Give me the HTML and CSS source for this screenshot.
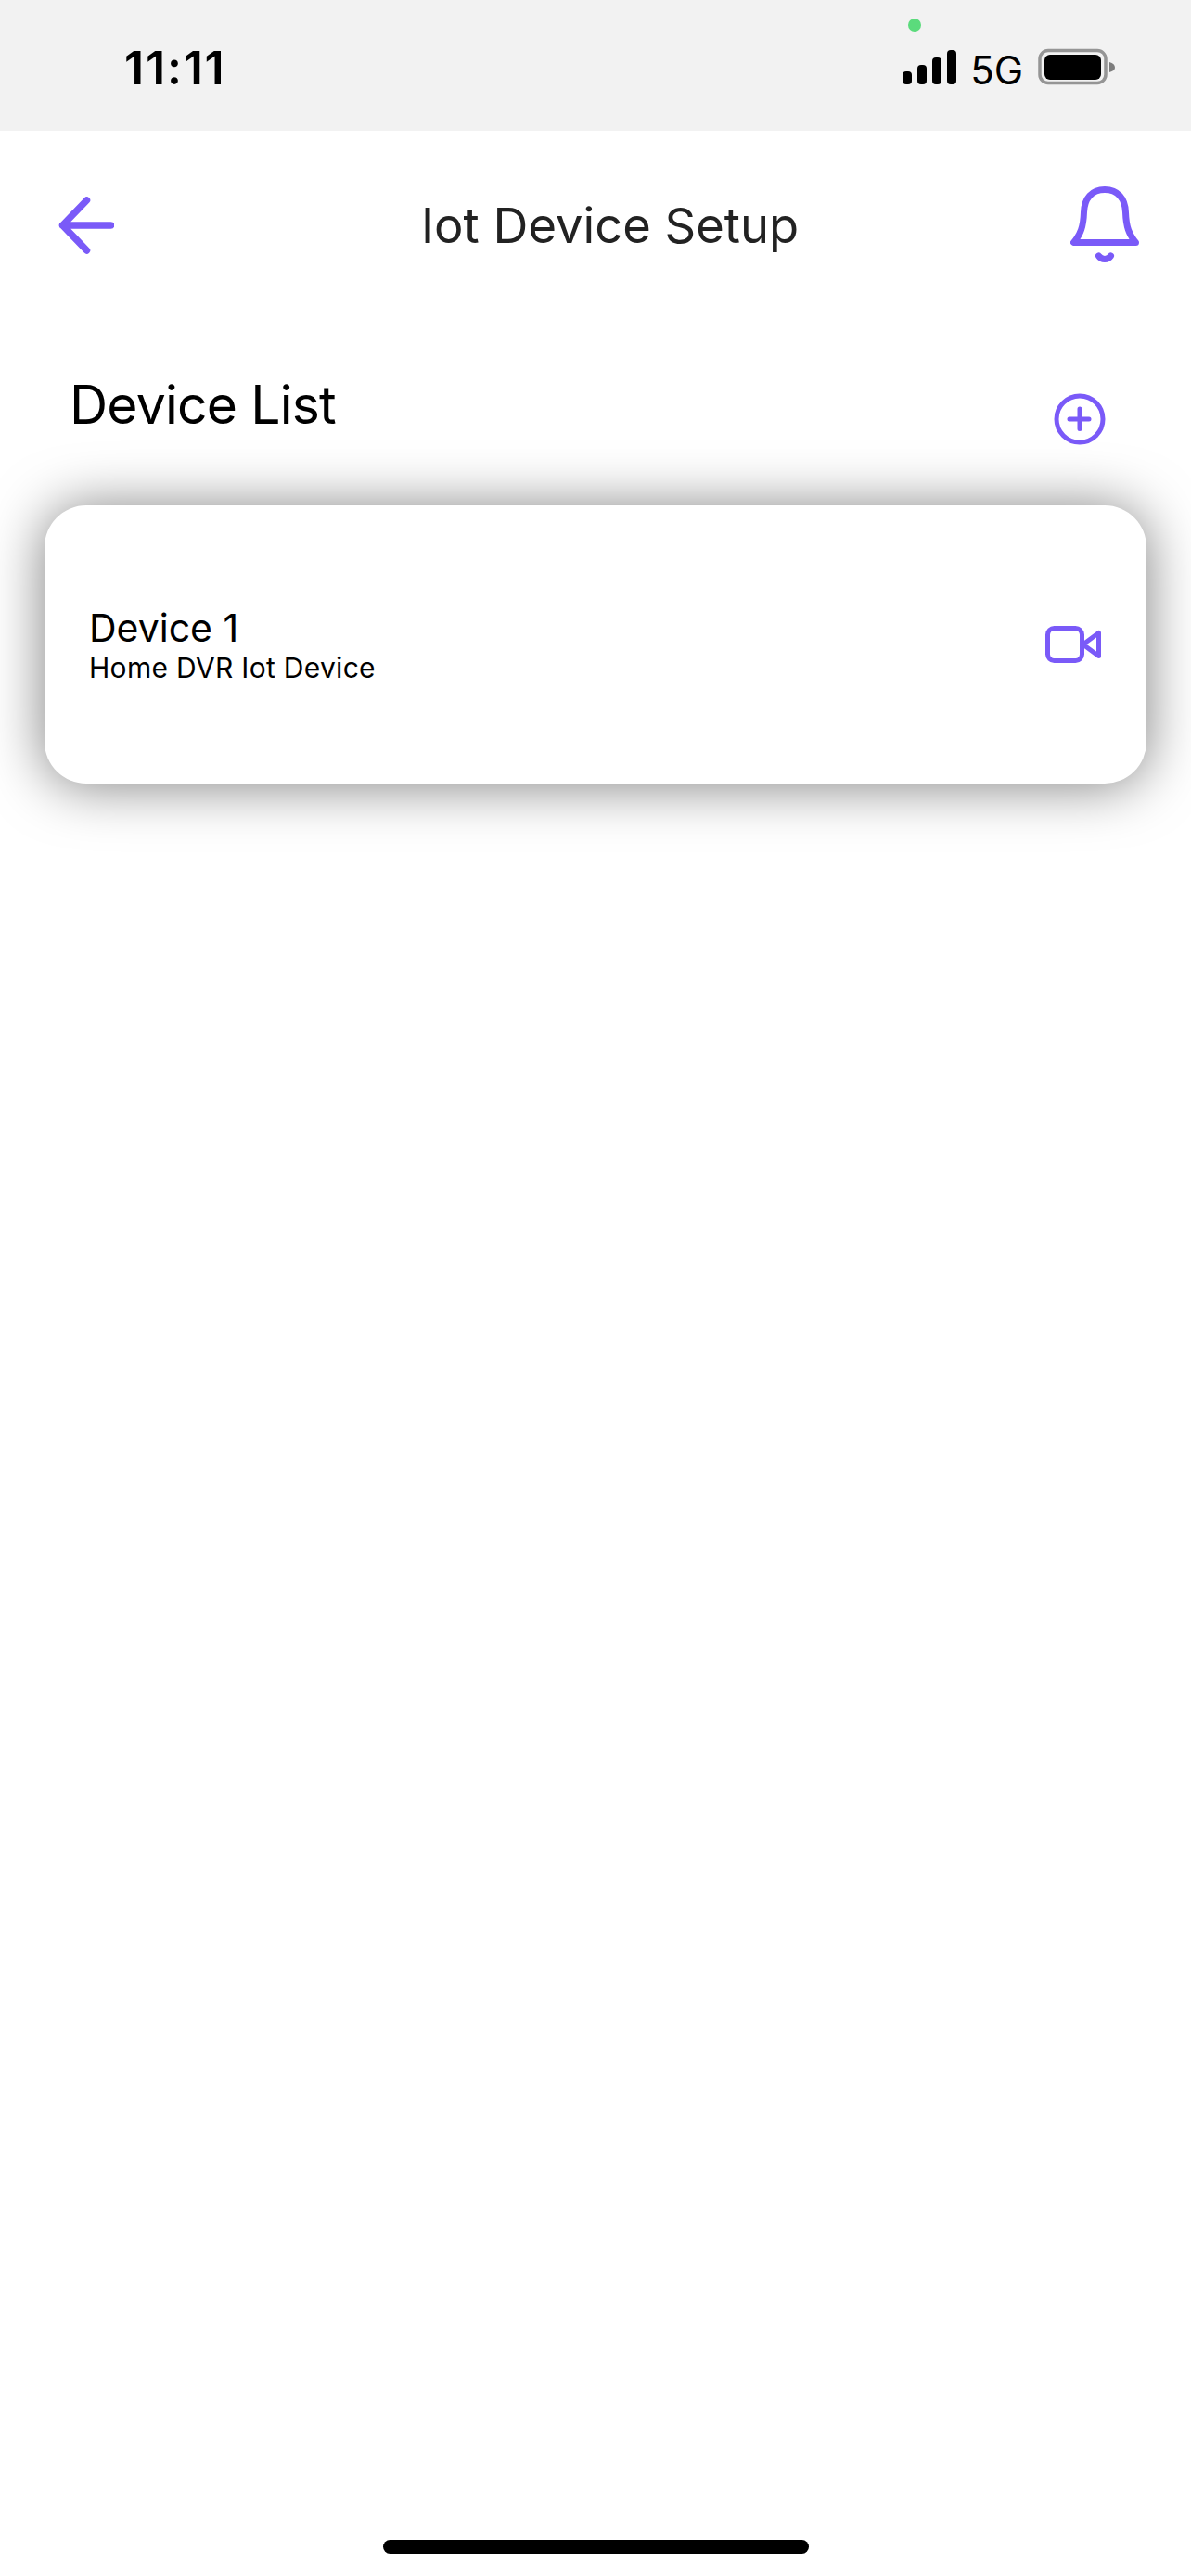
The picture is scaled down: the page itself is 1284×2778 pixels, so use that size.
FILE: index.html
```html
<!DOCTYPE html>
<html lang="en">
<head>
<meta charset="utf-8">
<title>Iot Device Setup</title>
<link rel="stylesheet" href="styles.css">
</head>
<body>
<div class="page">
  <div class="status-bar">
    <span class="time">11:11</span>
    <div class="status-icons">
      <svg class="signal" width="58" height="76" viewBox="973 16 58 76">
        <circle cx="986" cy="27" r="7" fill="#5bdb7c"/>
        <rect x="973" y="77" width="10" height="14" rx="4"/>
        <rect x="989" y="70" width="10" height="21" rx="4"/>
        <rect x="1005" y="62" width="10" height="29" rx="4"/>
        <rect x="1021" y="54" width="10" height="37" rx="4"/>
      </svg>
      <span class="network">5G</span>
      <svg class="battery" width="84" height="40" viewBox="1119 52 84 40">
        <rect x="1121" y="54.5" width="71" height="35" rx="9" fill="none" stroke="#959595" stroke-width="3.5"/>
        <rect x="1126" y="59" width="61" height="27" rx="6" fill="#000"/>
        <path d="M1196 67 C1200 68 1202 70 1202 73 C1202 75 1200 77 1196 78 Z" fill="#7d7d7d"/>
      </svg>
    </div>
  </div>

  <header class="app-bar">
    <svg class="icon-back" width="60" height="62" viewBox="63 212 60 62" fill="none" stroke="#7a5af8" stroke-width="7.5" stroke-linecap="round" stroke-linejoin="round">
      <path d="M119.500 243H67.500M93.500 216L67.500 243L93.500 270"/>
    </svg>
    <h1 class="title">Iot Device Setup</h1>
    <svg class="icon-bell" width="74" height="84" viewBox="1154 202 74 84" fill="none" stroke="#7a5af8" stroke-width="7" stroke-linecap="round" stroke-linejoin="round">
      <path d="M1157.500 262.500H1224.500C1217 254 1214 245 1213.500 230C1213 215 1205 205.500 1191 205.500C1177 205.500 1169 215 1168.500 230C1168 245 1165 254 1157.500 262.500Z"/>
      <path d="M1184.500 277C1187.500 281.500 1194.500 281.500 1197.500 277"/>
    </svg>
  </header>

  <section class="list-head">
    <h2 class="list-title">Device List</h2>
    <svg class="icon-add" width="56" height="56" viewBox="0 0 56 56" fill="none" stroke="#7a5af8" stroke-width="5" stroke-linecap="round">
      <circle cx="28" cy="28" r="25"/>
      <path d="M28 17V38.500M17 28H38"/>
    </svg>
  </section>

  <article class="device-card">
    <div class="device-text">
      <div class="device-name">Device 1</div>
      <div class="device-desc">Home DVR Iot Device</div>
    </div>
    <svg class="icon-video" width="60" height="40" viewBox="0 0 60 40" fill="none" stroke="#7a5af8" stroke-width="5" stroke-linecap="round" stroke-linejoin="round">
      <rect x="2.500" y="2.500" width="37" height="35" rx="7"/>
      <path d="M40.500 20L57.500 7.500V32.500Z"/>
    </svg>
  </article>

  <div class="home-bar"></div>
</div>
</body>
</html>
```

FILE: styles.css
```css
* { box-sizing: border-box; }
html, body { margin: 0; padding: 0; background: #fff; }
body { font-family: Inter, "Liberation Sans", sans-serif; color: #000; }
svg { display: block; flex: none; }

.page {
  width: 1284px;
  height: 2778px;
  display: flex;
  flex-direction: column;
  overflow: hidden;
}

.status-bar {
  height: 141px;
  flex: none;
  background: #f2f2f2;
  display: flex;
  justify-content: space-between;
  align-items: flex-start;
  padding: 0 81px 0 134px;
}
.time {
  font-size: 50px;
  font-weight: 600;
  line-height: 60px;
  letter-spacing: 1.800px;
  margin-top: 43px;
}
.status-icons {
  display: flex;
  align-items: flex-start;
  padding-top: 16px;
}
.network {
  font-size: 42px;
  line-height: 50px;
  margin: 35px 0 0 15px;
}
.battery { margin: 36px 0 0 16px; }

.app-bar {
  height: 204px;
  flex: none;
  display: flex;
  align-items: center;
  padding: 0 56px 0 63px;
}
.title {
  margin: 0 0 0 331px;
  font-size: 52.500px;
  font-weight: 400;
  line-height: 60px;
  color: #222;
  white-space: nowrap;
}
.icon-bell { margin-left: auto; }

.list-head {
  height: 200px;
  flex: none;
  display: flex;
  justify-content: space-between;
  align-items: flex-start;
  padding: 0 92px 0 75px;
}
.list-title {
  margin: 57px 0 0;
  font-size: 57px;
  font-weight: 400;
  letter-spacing: -0.8px;
  line-height: 70px;
}
.icon-add { margin-top: 79px; }

.device-card {
  width: 1188px;
  height: 300px;
  flex: none;
  margin-left: 48px;
  padding: 0 49px 0 48px;
  background: #fff;
  border-radius: 45px;
  box-shadow: 0 2px 60px rgba(0, 0, 0, 0.5);
  display: flex;
  justify-content: space-between;
  align-items: center;
}
.device-name { font-size: 41px; line-height: 48px; }
.device-desc { font-size: 30px; letter-spacing: 0.3px; line-height: 36px; margin-top: 1px; }

.home-bar {
  width: 459px;
  height: 15px;
  flex: none;
  margin: auto 0 24px 413px;
  background: #000;
  border-radius: 8px;
}
```
